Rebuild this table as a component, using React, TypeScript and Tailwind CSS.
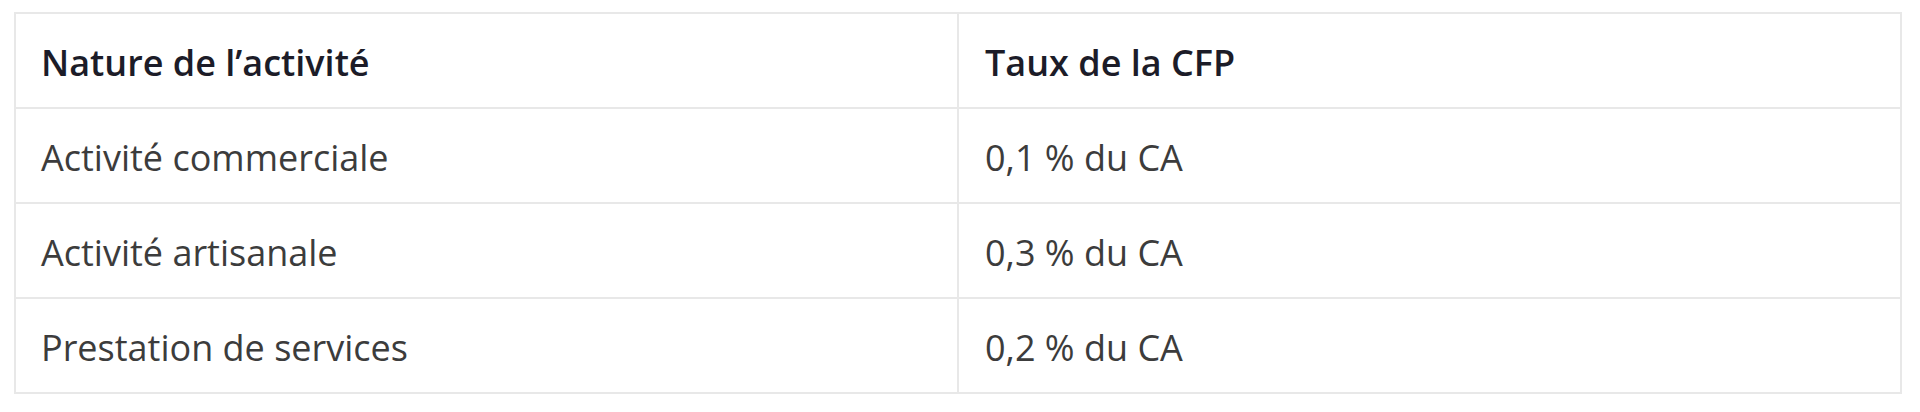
import React from "react";

const rows = [
  ["Activité commerciale", "0,1 % du CA"],
  ["Activité artisanale", "0,3 % du CA"],
  ["Prestation de services", "0,2 % du CA"],
];

export default function App() {
  return (
    <div className="w-[1920px] h-[412px] bg-white pl-[14px] pt-[12px]" style={{ fontFamily: '"Open Sans", "Noto Sans", sans-serif' }}>
      <table className="w-[1888px] border-collapse table-fixed">
        <thead>
          <tr className="h-[95px]">
            <th className="border-2 border-[#e8e8e8] text-left font-semibold text-[36px] text-[#1c1c28] pl-[25px] pt-[4px] align-middle">Nature de l’activité</th>
            <th className="border-2 border-[#e8e8e8] text-left font-semibold text-[36px] text-[#1c1c28] pl-[26px] pt-[4px] align-middle">Taux de la CFP</th>
          </tr>
        </thead>
        <tbody>
          {rows.map(([a, b]) => (
            <tr key={a} className="h-[95px]">
              <td className="border-2 border-[#e8e8e8] text-[36px] text-[#3c3c3c] pl-[25px] pt-[4px] align-middle">{a}</td>
              <td className="border-2 border-[#e8e8e8] text-[36px] text-[#3c3c3c] pl-[26px] pt-[4px] align-middle">{b}</td>
            </tr>
          ))}
        </tbody>
      </table>
    </div>
  );
}
